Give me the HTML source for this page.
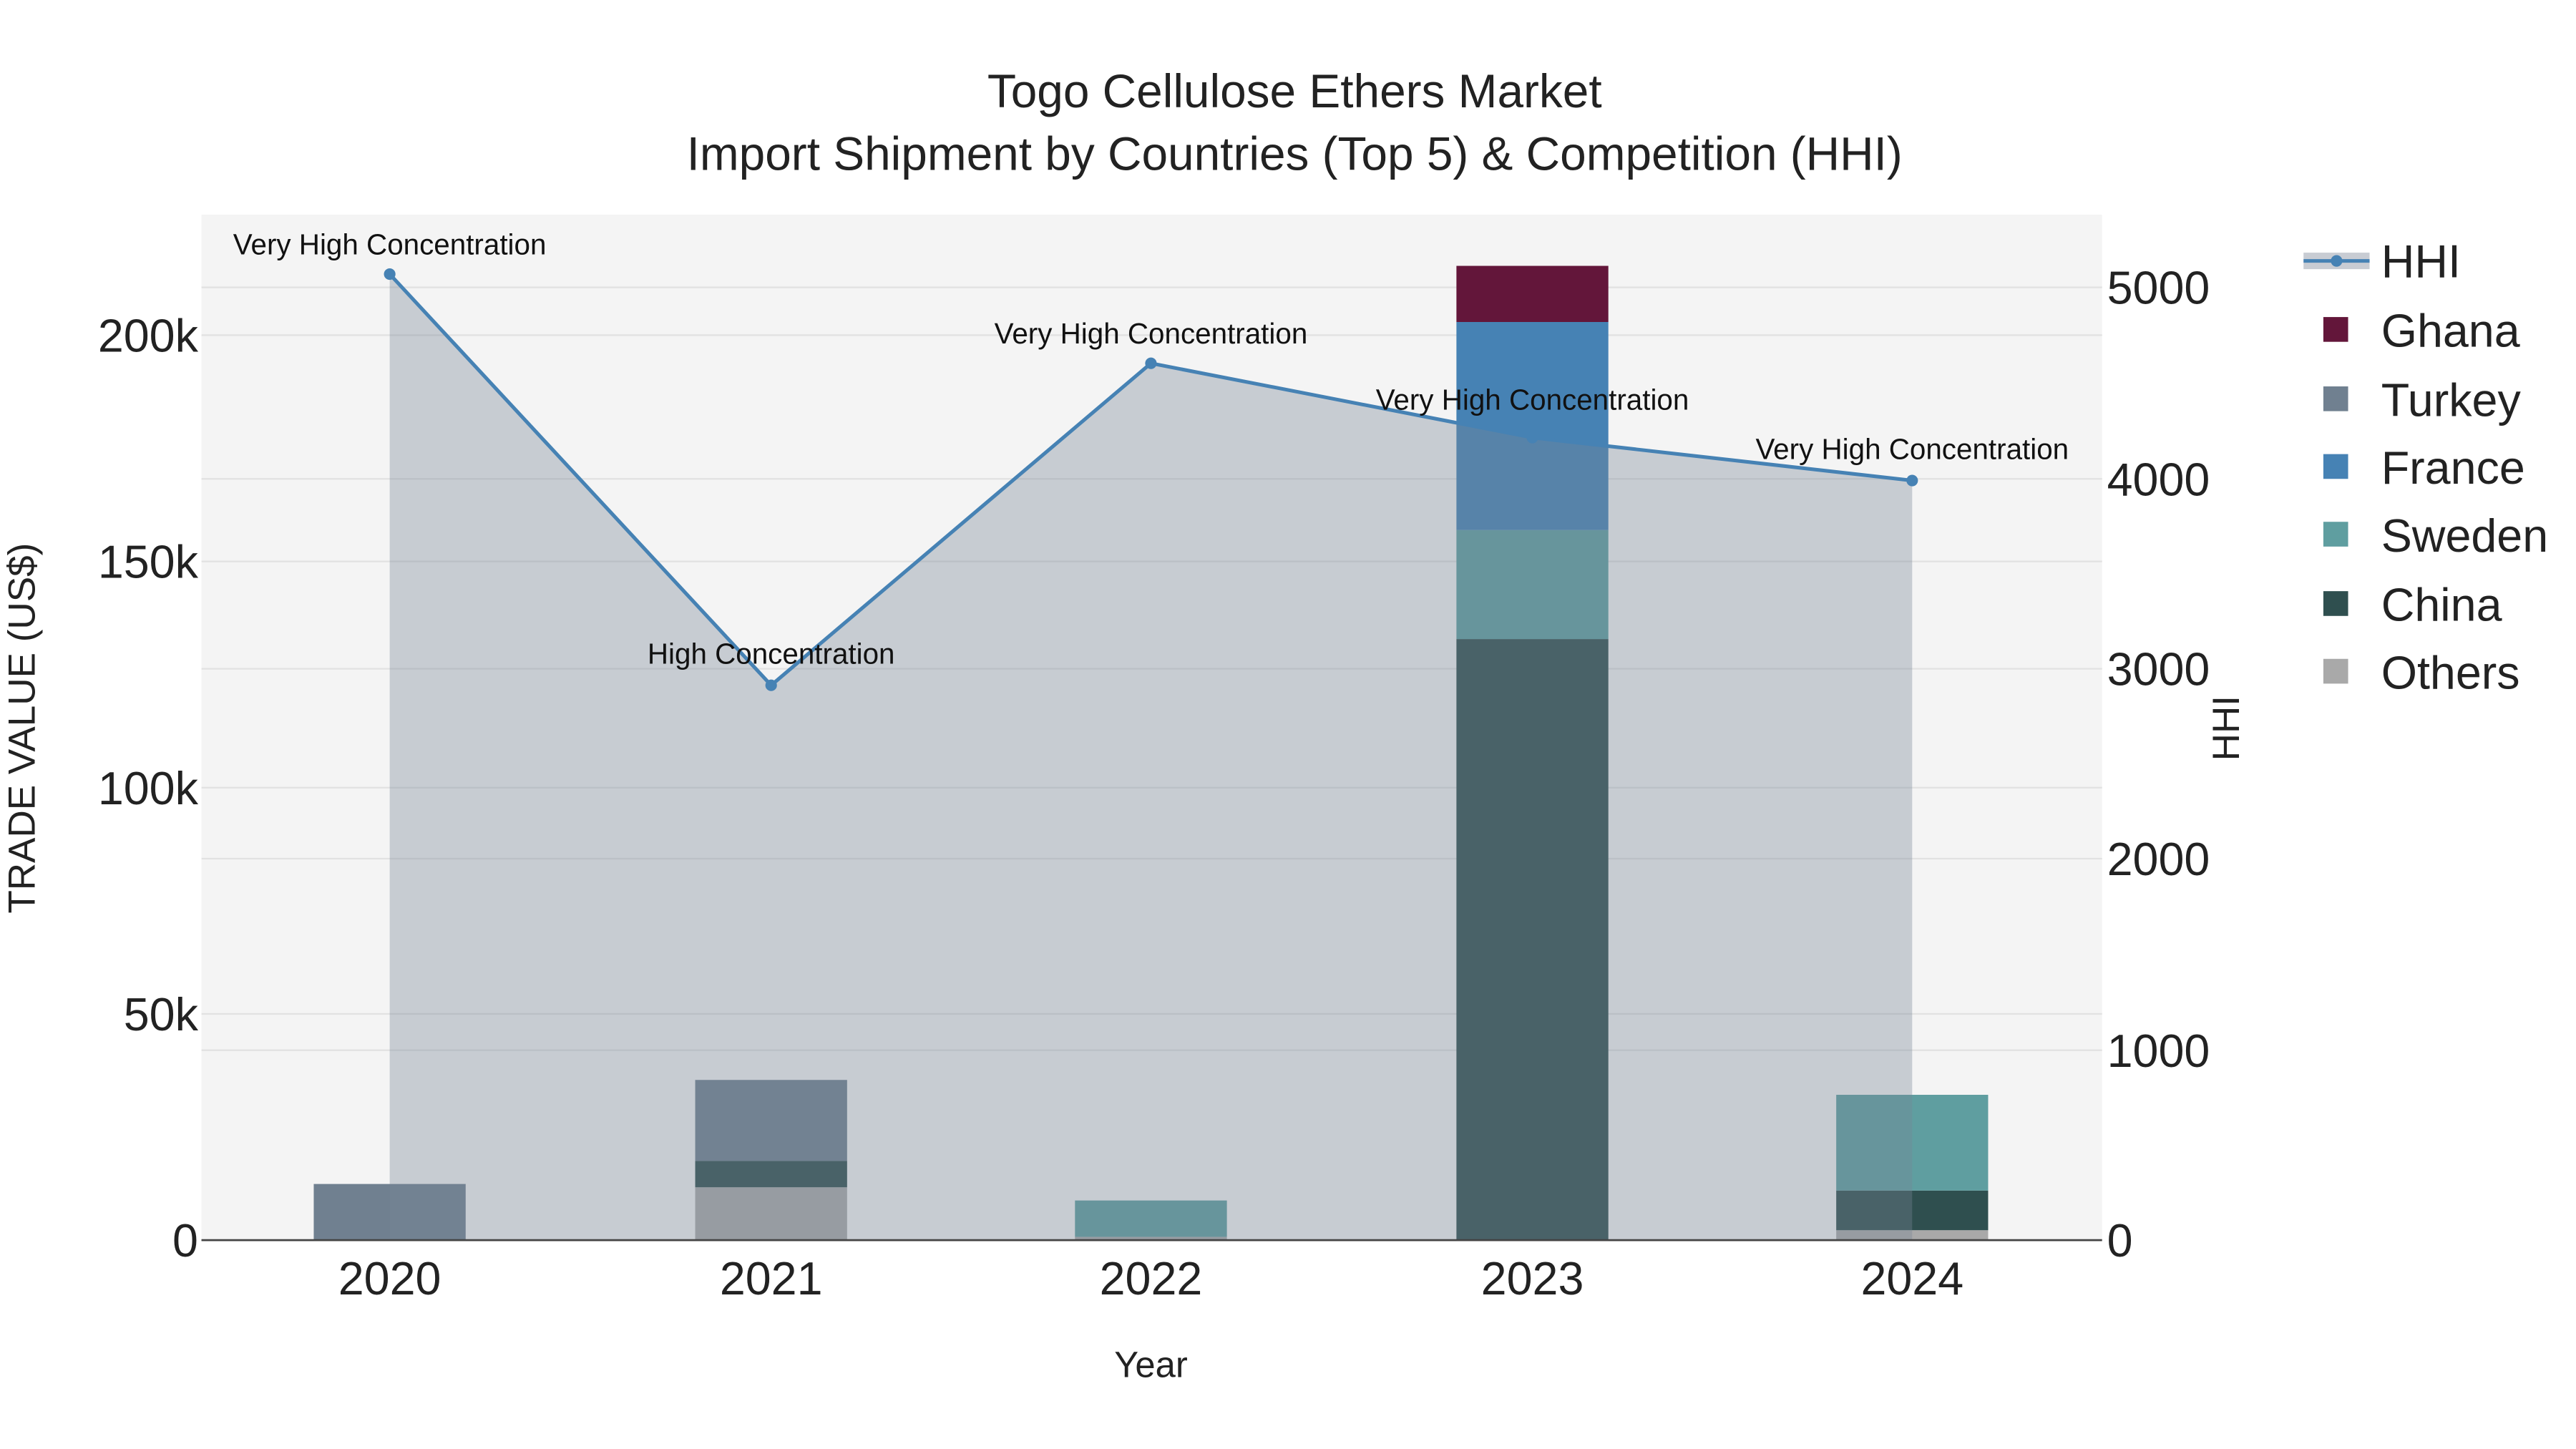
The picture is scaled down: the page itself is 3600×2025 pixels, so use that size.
<!DOCTYPE html>
<html><head><meta charset="utf-8"><style>
html,body{margin:0;padding:0;background:#fff;}
svg{display:block;}
text{font-family:"Liberation Sans",sans-serif;}
</style></head><body>
<svg width="3600" height="2025" viewBox="0 0 1560 877.5" xmlns="http://www.w3.org/2000/svg">
<rect x="0" y="0" width="1560" height="877.5" fill="#fff"/>
<rect x="122" y="130" width="1151" height="621" fill="#f4f4f4"/>
<g stroke="#e2e2e2" stroke-width="1">
<line x1="122" x2="1273" y1="614" y2="614"/><line x1="122" x2="1273" y1="477" y2="477"/>
<line x1="122" x2="1273" y1="340" y2="340"/><line x1="122" x2="1273" y1="203" y2="203"/>
<line x1="122" x2="1273" y1="636" y2="636"/><line x1="122" x2="1273" y1="520" y2="520"/>
<line x1="122" x2="1273" y1="405" y2="405"/><line x1="122" x2="1273" y1="290" y2="290"/>
<line x1="122" x2="1273" y1="174" y2="174"/>
</g>
<rect x="190" y="717" width="92" height="34" fill="#708090"/>
<rect x="421" y="719" width="92" height="32" fill="#a9a9a9"/>
<rect x="421" y="703" width="92" height="16" fill="#2f4f4f"/>
<rect x="421" y="654" width="92" height="49" fill="#708090"/>
<rect x="651" y="749" width="92" height="2" fill="#a9a9a9"/>
<rect x="651" y="727" width="92" height="22" fill="#5f9ea0"/>
<rect x="882" y="387" width="92" height="364" fill="#2f4f4f"/>
<rect x="882" y="321" width="92" height="66" fill="#5f9ea0"/>
<rect x="882" y="195" width="92" height="126" fill="#4682b4"/>
<rect x="882" y="161" width="92" height="34" fill="#63163a"/>
<rect x="1112" y="745" width="92" height="6" fill="#a9a9a9"/>
<rect x="1112" y="721" width="92" height="24" fill="#2f4f4f"/>
<rect x="1112" y="663" width="92" height="58" fill="#5f9ea0"/>
<path d="M236,166 L467,415 L697,220 L928,265 L1158,291 L1158,751 L236,751 Z" fill="rgba(120,132,150,0.36)"/>
<polyline points="236,166 467,415 697,220 928,265 1158,291" fill="none" stroke="#4682b4" stroke-width="2.2"/>
<g fill="#4682b4"><circle cx="236" cy="166" r="3.5"/><circle cx="467" cy="415" r="3.5"/><circle cx="697" cy="220" r="3.5"/><circle cx="928" cy="265" r="3.5"/><circle cx="1158" cy="291" r="3.5"/></g>
<line x1="122" x2="1273" y1="751" y2="751" stroke="#444" stroke-width="1.2"/>
<g font-size="17.5" fill="#111" text-anchor="middle">
<text x="236" y="154">Very High Concentration</text>
<text x="467" y="402">High Concentration</text>
<text x="697" y="208">Very High Concentration</text>
<text x="928" y="248">Very High Concentration</text>
<text x="1158" y="278">Very High Concentration</text>
</g>
<g text-anchor="middle" fill="#222" font-size="28.5">
<text x="784" y="65">Togo Cellulose Ethers Market</text>
<text x="784" y="103">Import Shipment by Countries (Top 5) &amp; Competition (HHI)</text>
</g>
<g font-size="28" fill="#222" text-anchor="end">
<text x="120" y="761">0</text><text x="120" y="624">50k</text><text x="120" y="487">100k</text>
<text x="120" y="350">150k</text><text x="120" y="213">200k</text>
</g>
<g font-size="28" fill="#222" text-anchor="start">
<text x="1276" y="761">0</text><text x="1276" y="646">1000</text><text x="1276" y="530">2000</text>
<text x="1276" y="415">3000</text><text x="1276" y="300">4000</text><text x="1276" y="184">5000</text>
</g>
<g font-size="28" fill="#222" text-anchor="middle">
<text x="236" y="784">2020</text><text x="467" y="784">2021</text><text x="697" y="784">2022</text>
<text x="928" y="784">2023</text><text x="1158" y="784">2024</text>
</g>
<text x="697" y="834" font-size="22" fill="#222" text-anchor="middle">Year</text>
<text transform="translate(21,441) rotate(-90)" font-size="23" fill="#222" text-anchor="middle">TRADE VALUE (US$)</text>
<text transform="translate(1356,441) rotate(-90)" font-size="23" fill="#222" text-anchor="middle">HHI</text>
<rect x="1395" y="153" width="40" height="10" fill="#c8ccd3"/>
<line x1="1395" x2="1435" y1="158" y2="158" stroke="#4682b4" stroke-width="2.2"/>
<circle cx="1415" cy="158" r="3.5" fill="#4682b4"/>
<rect x="1407" y="192" width="15" height="15" fill="#63163a"/>
<rect x="1407" y="234" width="15" height="15" fill="#708090"/>
<rect x="1407" y="275" width="15" height="15" fill="#4682b4"/>
<rect x="1407" y="316" width="15" height="15" fill="#5f9ea0"/>
<rect x="1407" y="358" width="15" height="15" fill="#2f4f4f"/>
<rect x="1407" y="399" width="15" height="15" fill="#a9a9a9"/>
<g font-size="28" fill="#222">
<text x="1442" y="168">HHI</text><text x="1442" y="210">Ghana</text><text x="1442" y="252">Turkey</text>
<text x="1442" y="293">France</text><text x="1442" y="334">Sweden</text><text x="1442" y="376">China</text>
<text x="1442" y="417">Others</text>
</g>
</svg>
</body></html>
